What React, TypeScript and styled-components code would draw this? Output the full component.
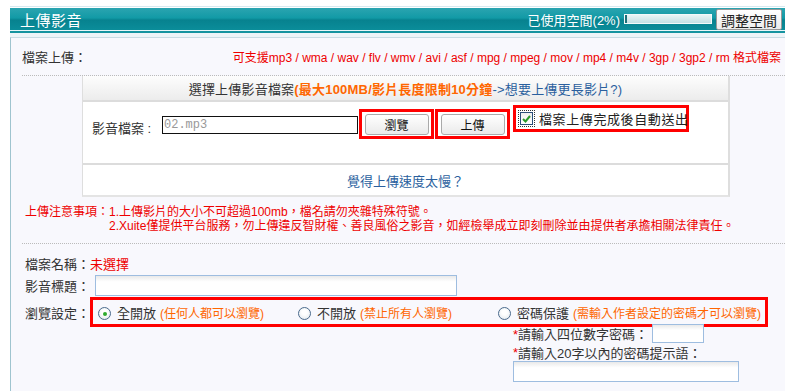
import styled, { createGlobalStyle } from "styled-components";

const GlobalStyle = createGlobalStyle`
  html, body {
    margin: 0;
    padding: 0;
    background: #fff;
  }
  body {
    width: 785px;
    height: 391px;
    overflow: hidden;
    font-family: "Liberation Sans", "Noto Sans CJK TC", sans-serif;
    color: #333;
  }
`;

const Page = styled.div`
  padding: 6px 0 0 10px;
  height: 385px;
`;

const TopLine = styled.div`
  border-top: 1px solid #d6eaf0;
`;

const Header = styled.div`
  height: 22px;
  margin-top: 1px;
  display: flex;
  align-items: center;
  justify-content: space-between;
  padding: 0 3px 0 10px;
  background: linear-gradient(#2ba4b0 0%, #129aa6 45%, #07828f 55%, #0b8d9a 100%);
  border-bottom: 1px solid #e8f6f8;
  box-shadow: 0 2px 0 #15939f;
`;

const Title = styled.div`
  color: #fff;
  font-size: 15px;
  letter-spacing: 0.5px;
`;

const Usage = styled.div`
  display: flex;
  align-items: center;
  gap: 4px;
  color: #fff;
  font-size: 13px;
  white-space: nowrap;
`;

const Meter = styled.div`
  width: 86px;
  height: 8px;
  border: 1px solid #f2f9fa;
  background: linear-gradient(#e9f4f6, #c3e0e4);
  position: relative;
  &::before {
    content: "";
    position: absolute;
    left: 0;
    top: 0;
    bottom: 0;
    width: 2px;
    background: #1d6f79;
  }
`;

const SmallButton = styled.button`
  height: 21px;
  padding: 0 4px;
  font-family: inherit;
  font-size: 14px;
  color: #222;
  background: linear-gradient(#fff, #ececec);
  border: 1px solid #999;
  border-radius: 2px;
`;

const Gap = styled.div`
  height: 4px;
  margin-top: 2px;
  background: #edf4f8;
`;

const Panel = styled.div`
  background: #f8f8fd;
  border-left: 1px solid #9fc4cf;
  border-top: 1px solid #c8dce3;
  height: 360px;
  padding-left: 11px;
`;

const Row = styled.div<{ h?: number }>`
  display: flex;
  align-items: center;
  height: ${(p) => p.h ?? 20}px;
  font-size: 13px;
  white-space: nowrap;
`;

const FormatRow = styled.div`
  display: flex;
  justify-content: space-between;
  align-items: center;
  height: 37px;
  padding: 0 4px 0 0;
  font-size: 13px;
  border-bottom: 1px dotted #bbb;
  white-space: nowrap;
`;

const Red = styled.span`
  color: #e00;
`;

const Formats = styled.span`
  color: #e00;
  font-size: 12px;
`;

const Box = styled.div`
  margin-left: 60px;
  width: 645px;
  background: #fff;
  border-left: 1px solid #dedede;
  border-right: 2px solid #dedede;
  border-bottom: 2px solid #e4e4e4;
`;

const BoxHead = styled.div`
  height: 24px;
  display: flex;
  align-items: center;
  justify-content: center;
  font-size: 13px;
  color: #333;
  background: linear-gradient(#fdfdfd, #ececec);
  border-bottom: 2px solid #dcdcdc;
  white-space: nowrap;
  letter-spacing: 0.2px;
`;

const Orange = styled.span`
  color: #f60;
  font-weight: bold;
`;

const Blue = styled.span`
  color: #2a5f9e;
`;

const BoxBody = styled.div`
  height: 58px;
  padding: 3px 0 0 9px;
  display: flex;
  align-items: flex-start;
  border-bottom: 2px solid #dcdcdc;
`;

const FileLabel = styled.div`
  font-size: 13px;
  margin-top: 13px;
  width: 70px;
  white-space: nowrap;
`;

const FileInput = styled.div`
  width: 193px;
  height: 16px;
  margin-top: 11px;
  border: 1px solid #111;
  background: #fff;
  font-family: "Liberation Mono", monospace;
  font-size: 12px;
  color: #999;
  padding-left: 1px;
  line-height: 16px;
`;

const Mark = styled.div<{ w: number; h: number }>`
  width: ${(p) => p.w}px;
  height: ${(p) => p.h}px;
  box-sizing: border-box;
  border: 3px solid #f00;
  display: flex;
  align-items: center;
  justify-content: center;
  white-space: nowrap;
`;

const BtnMark = styled(Mark)`
  margin: 4px 0 0 1px;
`;

const FormButton = styled.button`
  width: 64px;
  height: 21px;
  font-family: inherit;
  font-size: 12px;
  color: #111;
  background: linear-gradient(#fff, #eaeaea);
  border: 1px solid #aaa;
  border-radius: 3px;
  padding: 0;
`;

const CheckMark = styled(Mark)`
  margin-left: 3px;
  justify-content: flex-start;
  padding-left: 4px;
  gap: 6px;
  color: #222;
`;

const CheckLabel = styled.span`
  font-size: 13px;
  letter-spacing: 0.6px;
`;

const CheckBox = styled.span`
  flex: none;
  width: 11px;
  height: 11px;
  border: 1px solid #2b4f7a;
  background: linear-gradient(#eee, #fff);
  outline: 1px dotted #333;
  outline-offset: 1px;
  display: flex;
  align-items: center;
  justify-content: center;
`;

const LinkRow = styled.div`
  height: 30px;
  display: flex;
  align-items: center;
  justify-content: center;
  font-size: 13px;
  color: #2a5f9e;
`;

const Notes = styled.div`
  display: flex;
  padding: 8px 0 0 3px;
  height: 38px;
  font-size: 12px;
  line-height: 14px;
  color: #e00;
  border-bottom: 1px dotted #bbb;
  white-space: nowrap;
`;

const NoteLines = styled.div`
  display: flex;
  flex-direction: column;
`;

const Fields = styled.div`
  padding: 9px 0 0 3px;
`;

const FieldLabel = styled.span<{ w: number }>`
  width: ${(p) => p.w}px;
  flex: none;
`;

const TextInput = styled.div<{ w: number; h: number }>`
  width: ${(p) => p.w}px;
  height: ${(p) => p.h}px;
  border: 1px solid #9ebde0;
  background: linear-gradient(#e9e9e9, #fff 30%, #fff);
  box-sizing: border-box;
`;

const RadioMark = styled(Mark)`
  justify-content: flex-start;
  padding-left: 5px;
`;

const RadioItem = styled.label<{ w?: number }>`
  display: flex;
  align-items: center;
  width: ${(p) => (p.w ? `${p.w}px` : "auto")};
  flex: none;
  font-size: 13px;
  color: #333;
  gap: 6px;
  white-space: nowrap;
`;

const Radio = styled.span<{ on?: boolean }>`
  flex: none;
  width: 11px;
  height: 11px;
  border-radius: 50%;
  border: 1px solid #4a6a8c;
  background: radial-gradient(circle at 50% 40%, #fff 30%, #dde4ea);
  display: flex;
  align-items: center;
  justify-content: center;
  margin-top: 3px;
  &::after {
    content: "";
    display: ${(p) => (p.on ? "block" : "none")};
    width: 4px;
    height: 4px;
    border-radius: 50%;
    background: #2eaa2e;
  }
`;

const Hint = styled.span`
  color: #f60;
  font-size: 12px;
  margin-left: -2px;
`;

const Password = styled.div`
  margin: -4px 0 0 488px;
  font-size: 13px;
  color: #333;
`;

const Star = styled.span`
  color: #e00;
`;

export default function App() {
  return (
    <Page>
      <GlobalStyle />
      <TopLine />
      <Header>
        <Title>上傳影音</Title>
        <Usage>
          已使用空間(2%)
          <Meter />
          <SmallButton>調整空間</SmallButton>
        </Usage>
      </Header>
      <Gap />
      <Panel>
        <FormatRow>
          <span>檔案上傳：</span>
          <Formats>
            可支援mp3 / wma / wav / flv / wmv / avi / asf / mpg / mpeg / mov / mp4 / m4v / 3gp / 3gp2 / rm 格式檔案
          </Formats>
        </FormatRow>
        <Box>
          <BoxHead>
            選擇上傳影音檔案<Orange>(最大100MB/影片長度限制10分鐘</Orange>
            <Blue>-&gt;想要上傳更長影片?)</Blue>
          </BoxHead>
          <BoxBody>
            <FileLabel>影音檔案 :</FileLabel>
            <FileInput>02.mp3</FileInput>
            <BtnMark w={75} h={30}>
              <FormButton>瀏覽</FormButton>
            </BtnMark>
            <BtnMark w={75} h={30}>
              <FormButton>上傳</FormButton>
            </BtnMark>
            <CheckMark w={176} h={27}>
              <CheckBox>
                <svg width="9" height="8" viewBox="0 0 9 8">
                  <path d="M1 4 L3.5 6.5 L8 1" fill="none" stroke="#2a9a2a" strokeWidth="2" />
                </svg>
              </CheckBox>
              <CheckLabel>檔案上傳完成後自動送出</CheckLabel>
            </CheckMark>
          </BoxBody>
          <LinkRow>覺得上傳速度太慢？</LinkRow>
        </Box>
        <Notes>
          <span>上傳注意事項：</span>
          <NoteLines>
            <span>1.上傳影片的大小不可超過100mb，檔名請勿夾雜特殊符號。</span>
            <span>2.Xuite僅提供平台服務，勿上傳違反智財權、善良風俗之影音，如經檢舉成立即刻刪除並由提供者承擔相關法律責任。</span>
          </NoteLines>
        </Notes>
        <Fields>
          <Row h={20}>
            檔案名稱：<Red>未選擇</Red>
          </Row>
          <Row h={24}>
            <FieldLabel w={70}>影音標題：</FieldLabel>
            <TextInput w={362} h={21} />
          </Row>
          <Row h={30}>
            <FieldLabel w={65}>瀏覽設定：</FieldLabel>
            <RadioMark w={678} h={30}>
              <RadioItem w={200}>
                <Radio on />
                全開放<Hint>(任何人都可以瀏覽)</Hint>
              </RadioItem>
              <RadioItem w={200}>
                <Radio />
                不開放<Hint>(禁止所有人瀏覽)</Hint>
              </RadioItem>
              <RadioItem>
                <Radio />
                密碼保護<Hint>(需輸入作者設定的密碼才可以瀏覽)</Hint>
              </RadioItem>
            </RadioMark>
          </Row>
          <Password>
            <Row h={20}>
              <FieldLabel w={139}>
                <Star>*</Star>請輸入四位數字密碼：
              </FieldLabel>
              <TextInput w={52} h={19} />
            </Row>
            <Row h={18}>
              <Star>*</Star>請輸入20字以內的密碼提示語：
            </Row>
            <TextInput w={226} h={21} />
          </Password>
        </Fields>
      </Panel>
    </Page>
  );
}
